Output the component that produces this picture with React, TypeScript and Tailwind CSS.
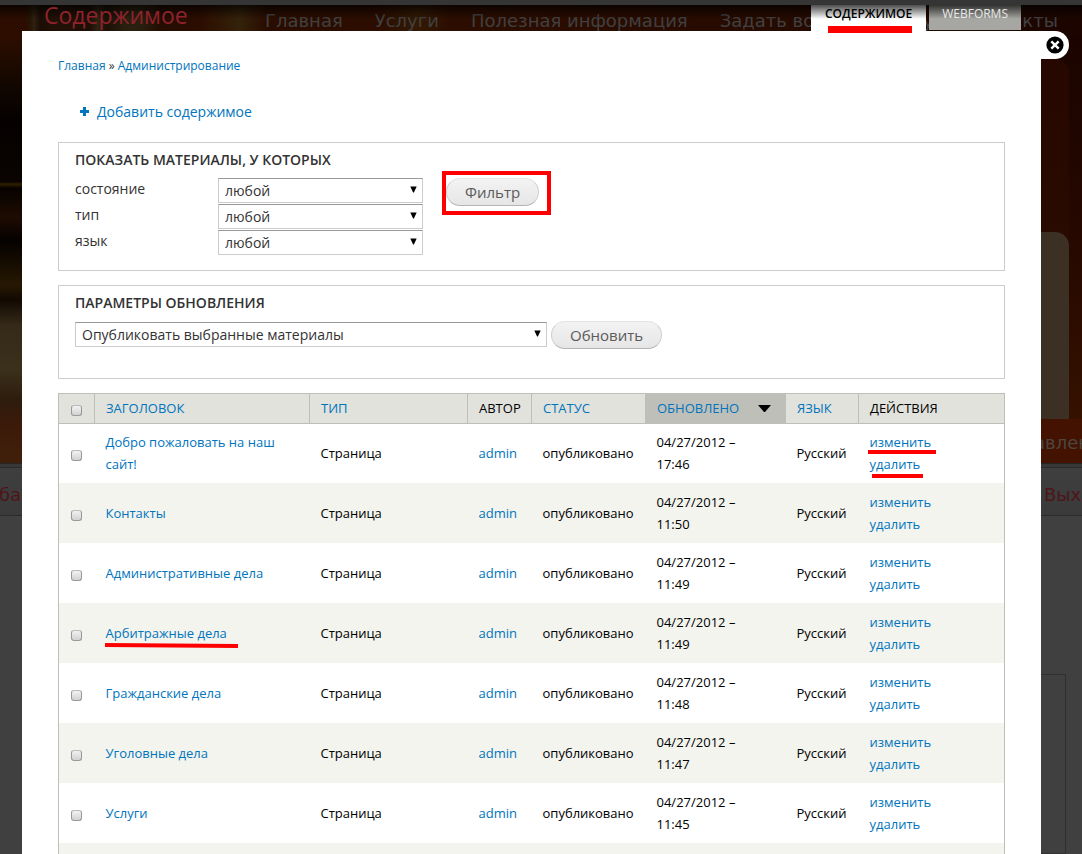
import React, { useState } from 'react';

interface Node {
  title: string;
  time: string;
  marked?: boolean;
  markedActions?: boolean;
}

const nodes: Node[] = [
  { title: 'Добро пожаловать на наш сайт!', time: '17:46', markedActions: true },
  { title: 'Контакты', time: '11:50' },
  { title: 'Административные дела', time: '11:49' },
  { title: 'Арбитражные дела', time: '11:49', marked: true },
  { title: 'Гражданские дела', time: '11:48' },
  { title: 'Уголовные дела', time: '11:47' },
  { title: 'Услуги', time: '11:45' },
];

const filters = [
  { id: 'status', label: 'состояние' },
  { id: 'type', label: 'тип' },
  { id: 'language', label: 'язык' },
];

const menu = ['Главная', 'Услуги', 'Полезная информация', 'Задать вопрос юристу', 'Контакты'];

const Select: React.FC<{ id: string; label?: string; option: string }> = ({ id, label, option }) => (
  <div className="relative w-full">
    <select
      id={id}
      aria-label={label}
      className="block w-full h-[25px] appearance-none border border-[#ccc] border-t-[#999] bg-white pt-px pl-[6px] pr-6 text-[14px] leading-[22px] text-[#333] outline-none"
    >
      <option>{option}</option>
    </select>
    <svg className="absolute right-[6px] top-2 pointer-events-none" width="7" height="7" viewBox="0 0 7 7">
      <path d="M0.3 0.5h6.4L3.9 6.5h-.8z" fill="#000" />
    </svg>
  </div>
);

const Button: React.FC<{ children: React.ReactNode }> = ({ children }) => (
  <button
    type="button"
    className="h-7 rounded-full border border-[#e4e4e4] border-b-[#b4b4b4] border-x-[#cfcfcf] bg-linear-to-b from-[#f3f3f3] to-[#e6e6e6] px-[18px] text-[15px] leading-6 text-[#5a5a5a]"
  >
    {children}
  </button>
);

const Checkbox: React.FC<{ label: string; checked?: boolean; onChange?: () => void }> = ({ label, checked, onChange }) => (
  <input
    type="checkbox"
    aria-label={label}
    checked={checked}
    onChange={onChange}
    className="block size-[11px] appearance-none rounded-[3px] border border-[#999] border-t-[#bbb] bg-linear-to-b from-[#f2f2f2] to-[#d2d2d2] checked:from-[#7ab4dd] checked:to-[#0074bd]"
  />
);

// Dimmed site page that stays visible behind the overlay
const Backdrop: React.FC = () => (
  <div className="absolute inset-0 flex flex-col overflow-hidden bg-[#404040] font-['DejaVu_Sans',sans-serif] whitespace-nowrap" aria-hidden="true">
    <div className="h-[463px] shrink-0 flex flex-col bg-[linear-gradient(to_right,transparent_0,transparent_240px,#2c0d00_420px,#250a00_850px,#1a0400_1000px),linear-gradient(#2c0d00_0,#2e0e00_35px,#120700_85px,#050100_120px,#0a0402_182px,#2f2000_184px,#080200_188px,#1d0c02_218px,#050100_240px,#261802_285px,#120902_300px,#352a17_325px,#3a301c_370px,#2d1c0c_400px,#3c1a0a_425px,#40200a_463px)]">
      <nav className="h-9 shrink-0 flex items-end gap-8 pl-[265px] text-[18px] leading-[30px] text-[#404040] bg-[linear-gradient(to_right,#2c0d00_26px,#251505_30px,#30200f_34px,#1c0e05_40px,#221107_60px,#1d0f06_90px,#2e2412_98px,#1c1006_106px,#28200f_125px,#2a200f_140px,#250d02_160px,#2c0d00_200px,#34220a_240px,#2a0d00_265px,#2c0d00_380px,#331a04_418px,#2c0d00_450px,#250a00_850px,#1c0500_1070px)]">
        {menu.map((item) => (
          <span key={item}>{item}</span>
        ))}
      </nav>
      <div className="grow flex justify-end bg-[linear-gradient(to_right,transparent_50%,#180300_50%)]">
        <div className="w-[41px] flex flex-col pr-[13px] pt-[23px] bg-linear-to-b from-[#1b0400] via-[#250800] to-[#351100]">
          <div className="grow rounded-tr-[14px] bg-linear-to-b from-[#270800] to-[#2b0d00] flex items-end">
            <div className="h-[187px] w-full rounded-tr-[14px] bg-[#3b3023]" />
          </div>
        </div>
      </div>
      <div className="h-11 flex justify-end bg-[linear-gradient(to_right,transparent_50%,#431200_50%)]">
        <div className="w-12 pt-1 text-[18px] leading-10 text-[#4c4540]">авление</div>
      </div>
    </div>
    <div className="h-1 shrink-0 bg-[#383838] border-t border-[#252525]" />
    <div className="h-[49px] shrink-0 flex justify-between border-y border-[#2b2b2b] bg-linear-to-b from-[#3f3f3f] to-[#3a3a3a] text-[18px] leading-[53px] text-[#4d1519]">
      <span className="-ml-3">оба</span>
      <span className="w-[38px]">Выход</span>
    </div>
    <div className="grow mt-[158px] ml-8 mr-4 border border-[#303030]" />
  </div>
);

const App: React.FC = () => {
  const [selected, setSelected] = useState<string[]>([]);

  const toggle = (title: string) => {
    setSelected(selected.includes(title) ? selected.filter((t) => t !== title) : [...selected, title]);
  };

  const toggleAll = () => {
    setSelected(selected.length === nodes.length ? [] : nodes.map((n) => n.title));
  };

  const th = 'border-r border-[#bebfb9] pl-[11px] pr-2 text-left font-normal uppercase';
  const td = 'pl-[11px] pr-2';
  const link = 'text-[#0074bd] hover:underline';

  return (
    <div className="relative h-screen overflow-hidden font-['Open_Sans','Noto_Sans',sans-serif]">
      <Backdrop />

      <div className="relative flex flex-col">
        <div className="h-[5px] bg-[#353535]" />
        <header className="h-[26px] flex justify-between pl-[44px] pr-[61px]">
          <h1 className="relative z-10 text-[23px] leading-5 text-[#8f222c]">Содержимое</h1>
          <nav className="flex items-start gap-[3px] text-[12px] leading-[18px] uppercase">
            <a href="#content" className="relative h-[26px] px-[14px] bg-white font-semibold text-black">
              Содержимое
              <span className="absolute left-[17px] right-[14px] top-[21px] z-10 h-[7px] bg-[#f00]" />
            </a>
            <a href="#webforms" className="h-[25px] px-[13px] bg-[#a6a7a2] text-[#e8e8e8]">
              <span className="relative z-10">Webforms</span>
            </a>
          </nav>
        </header>
        <div className="absolute inset-x-0 top-[5px] h-[14px] bg-linear-to-b from-black/70 to-transparent pointer-events-none" />

        <main className="relative ml-[22px] mr-[41px] bg-white px-9 pt-6">
          <button
            type="button"
            aria-label="Закрыть"
            className="absolute left-full top-0 size-7 rounded-r-full bg-white flex items-center justify-center"
          >
            <svg width="18" height="18" viewBox="0 0 18 18">
              <circle cx="9" cy="9" r="8.6" fill="#000" />
              <path d="M5.3 5.3l7.4 7.4M12.7 5.3l-7.4 7.4" stroke="#fff" strokeWidth="2.4" />
            </svg>
          </button>

          <div className="text-[12px] leading-[22px] text-[#333]">
            <a href="#home" className={link}>Главная</a> » <a href="#admin" className={link}>Администрирование</a>
          </div>

          <div className="mt-[23px] pl-[22px] text-[14px] leading-[22px]">
            <a href="#add" className={`${link} inline-flex items-center gap-2`}>
              <svg width="9" height="9" viewBox="0 0 9 9">
                <path d="M3 0h3v3h3v3H6v3H3V6H0V3h3z" fill="#0074bd" />
              </svg>
              Добавить содержимое
            </a>
          </div>

          <section className="mt-[19px] h-[129px] border border-[#ccc] px-4 pt-[6px] text-[#333]">
            <h2 className="text-[14px] leading-[22px] font-semibold uppercase">Показать материалы, у которых</h2>
            <div className="mt-[7px] flex items-start gap-[23px]">
              <div className="flex flex-col gap-px">
                {filters.map((f) => (
                  <div key={f.id} className="flex">
                    <label htmlFor={f.id} className="w-[143px] text-[14px] leading-[22px]">{f.label}</label>
                    <div className="w-[205px]">
                      <Select id={f.id} option="любой" />
                    </div>
                  </div>
                ))}
              </div>
              <div className="relative">
                <Button>Фильтр</Button>
                <span className="absolute -left-1 -right-3 -top-[7px] -bottom-[9px] border-4 border-[#f00] pointer-events-none" />
              </div>
            </div>
          </section>

          <section className="mt-[14px] h-[94px] border border-[#ccc] px-4 pt-[6px] text-[#333]">
            <h2 className="text-[14px] leading-[22px] font-semibold uppercase">Параметры обновления</h2>
            <div className="mt-[7px] flex items-center gap-1">
              <div className="w-[472px]">
                <Select id="operation" label="Параметры обновления" option="Опубликовать выбранные материалы" />
              </div>
              <Button>Обновить</Button>
            </div>
          </section>

          <table className="mt-[14px] w-full table-fixed border-collapse border border-[#bebfb9] text-[13px] leading-[22px] text-black">
            <colgroup>
              <col className="w-9" />
              <col />
              <col className="w-[158px]" />
              <col className="w-16" />
              <col className="w-[114px]" />
              <col className="w-[140px]" />
              <col className="w-[73px]" />
              <col className="w-[146px]" />
            </colgroup>
            <thead>
              <tr className="h-[30px] border-b border-[#bebfb9] bg-[#e1e2dc] text-[13px] leading-5">
                <th className="border-r border-[#bebfb9] pl-3 pt-1">
                  <Checkbox label="Выбрать все" checked={selected.length === nodes.length} onChange={toggleAll} />
                </th>
                <th className={th}><a href="#title" className={link}>Заголовок</a></th>
                <th className={th}><a href="#type" className={link}>Тип</a></th>
                <th className={th}>Автор</th>
                <th className={th}><a href="#status" className={link}>Статус</a></th>
                <th className={`${th} bg-[#bebfb9]`}>
                  <a href="#changed" className="flex items-center justify-between pr-[6px] text-[#0074bd]">
                    Обновлено
                    <svg width="13" height="7" viewBox="0 0 13 7">
                      <path d="M0 0h13L7 7H6z" fill="#000" />
                    </svg>
                  </a>
                </th>
                <th className={th}><a href="#language" className={link}>Язык</a></th>
                <th className={th}>Действия</th>
              </tr>
            </thead>
            <tbody>
              {nodes.map((node) => (
                <tr key={node.title} className="h-[60px] even:bg-[#f3f4ee]">
                  <td className="pl-3 pt-[5px]">
                    <Checkbox label={node.title} checked={selected.includes(node.title)} onChange={() => toggle(node.title)} />
                  </td>
                  <td className={td}>
                    <span className="relative">
                      <a href="#node" className={link}>{node.title}</a>
                      {node.marked && (
                        <svg className="absolute -left-px top-[19px]" width="133" height="6" viewBox="0 0 133 6">
                          <path d="M0 0L133 1v4L0 4z" fill="#f00" />
                        </svg>
                      )}
                    </span>
                  </td>
                  <td className={td}>Страница</td>
                  <td className={td}><a href="#user" className={link}>admin</a></td>
                  <td className={td}>опубликовано</td>
                  <td className={td}>04/27/2012 –<br />{node.time}</td>
                  <td className={td}>Русский</td>
                  <td className={td}>
                    <div className="relative">
                      <a href="#edit" className={link}>изменить</a>
                      {node.markedActions && <span className="absolute -left-[2px] top-[19px] h-1 w-[68px] bg-[#f00]" />}
                    </div>
                    <div className="relative">
                      <a href="#delete" className={link}>удалить</a>
                      {node.markedActions && <span className="absolute left-[2px] top-[21px] h-1 w-[51px] bg-[#f00]" />}
                    </div>
                  </td>
                </tr>
              ))}
              <tr className="h-[60px] even:bg-[#f3f4ee]">
                <td colSpan={8} />
              </tr>
            </tbody>
          </table>
        </main>
      </div>
    </div>
  );
};

export default App;
